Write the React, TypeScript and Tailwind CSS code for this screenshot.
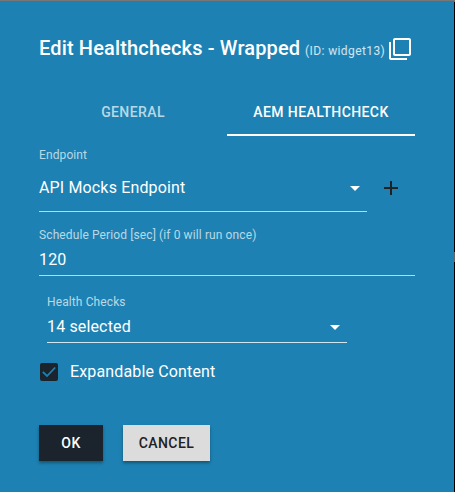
import React from 'react';

function CopyIcon() {
  return (
    <svg className="mt-[2px] ml-[3px] h-6 w-6 shrink-0 fill-white" viewBox="0 0 24 24">
      <path d="M3 5H1v16c0 1.1.9 2 2 2h16v-2H3V5zm18-4H7c-1.1 0-2 .9-2 2v14c0 1.1.9 2 2 2h14c1.1 0 2-.9 2-2V3c0-1.1-.9-2-2-2zm0 16H7V3h14v14z" />
    </svg>
  );
}

function Caret() {
  return (
    <svg className="h-6 w-6 fill-white" viewBox="0 0 24 24">
      <path d="M7 10l5 5 5-5z" />
    </svg>
  );
}

export default function App() {
  return (
    <div className="flex h-[492px] w-[455px] flex-col overflow-hidden bg-[#1d82b3] font-['Roboto',sans-serif] text-white antialiased">
      <div className="h-px shrink-0 bg-[#777777]" />
      <div className="flex flex-1">
        <main className="w-[454px] pl-[39px]">
          <header className="mt-[35px] flex h-6 items-center whitespace-nowrap">
            <h1 className="w-[266px] text-xl leading-6 font-medium tracking-[0.15px]">Edit Healthchecks - Wrapped</h1>
            <span className="mt-[5px] w-[80px] text-xs tracking-[0.4px] text-white/80">(ID: widget13)</span>
            <CopyIcon />
          </header>

          <nav className="mt-[28px] flex h-12 w-[376px] text-sm font-medium tracking-[0.4px]">
            <div className="flex w-[188px] items-center justify-center text-white/70">GENERAL</div>
            <div className="flex w-[188px] items-center justify-center border-b-2 border-white pt-[2px]">AEM HEALTHCHECK</div>
          </nav>

          <section className="mt-[11px] flex">
            <div className="h-[65px] w-[328px] border-b border-white/70">
              <div className="text-xs leading-4 tracking-[0.11px] text-white/70">Endpoint</div>
              <div className="mt-[13px] flex h-6 items-center justify-between text-base tracking-[0.15px]">
                API Mocks Endpoint
                <Caret />
              </div>
            </div>
            <svg className="mt-[29px] ml-3 h-6 w-6 fill-[#212121]" viewBox="0 0 24 24">
              <path d="M19 13h-6v6h-2v-6H5v-2h6V5h2v6h6z" />
            </svg>
          </section>

          <section className="mt-[15px] h-[49px] w-[376px] border-b border-white/70">
            <div className="text-xs leading-4 tracking-[0.11px] text-white/70">Schedule Period [sec] (if 0 will run once)</div>
            <div className="mt-[5px] text-base leading-6 tracking-[0.15px]">120</div>
          </section>

          <section className="mt-[18px] ml-2 h-[49px] w-[300px] border-b border-white/80">
            <div className="text-xs leading-4 tracking-[0.11px] text-white/70">Health Checks</div>
            <div className="mt-[5px] flex h-6 items-center justify-between text-base tracking-[0.15px]">
              14 selected
              <Caret />
            </div>
          </section>

          <label className="mt-[17px] flex h-6 items-center text-base tracking-[0.15px]">
            <svg className="mr-3 ml-px h-[18px] w-[18px]" viewBox="0 0 18 18">
              <rect width="18" height="18" rx="2" fill="#1b242d" />
              <path d="M2.8 8.8l4.2 4.2 8.2-8.5" fill="none" stroke="#1d82b3" strokeWidth="1.8" />
            </svg>
            Expandable Content
          </label>

          <footer className="mt-[41px] flex gap-5 text-sm font-medium tracking-[0.4px]">
            <button className="h-9 w-16 bg-[#1b242d] shadow-[0_2px_3px_rgba(0,0,0,0.35)]">OK</button>
            <button className="h-9 w-[87px] bg-[#dcdcdc] text-[#212121] shadow-[0_2px_3px_rgba(0,0,0,0.35)]">CANCEL</button>
          </footer>
        </main>
        <div className="mt-px w-px bg-black pt-[250px]">
          <div className="h-[10px] bg-[#6b625f]" />
        </div>
      </div>
    </div>
  );
}
